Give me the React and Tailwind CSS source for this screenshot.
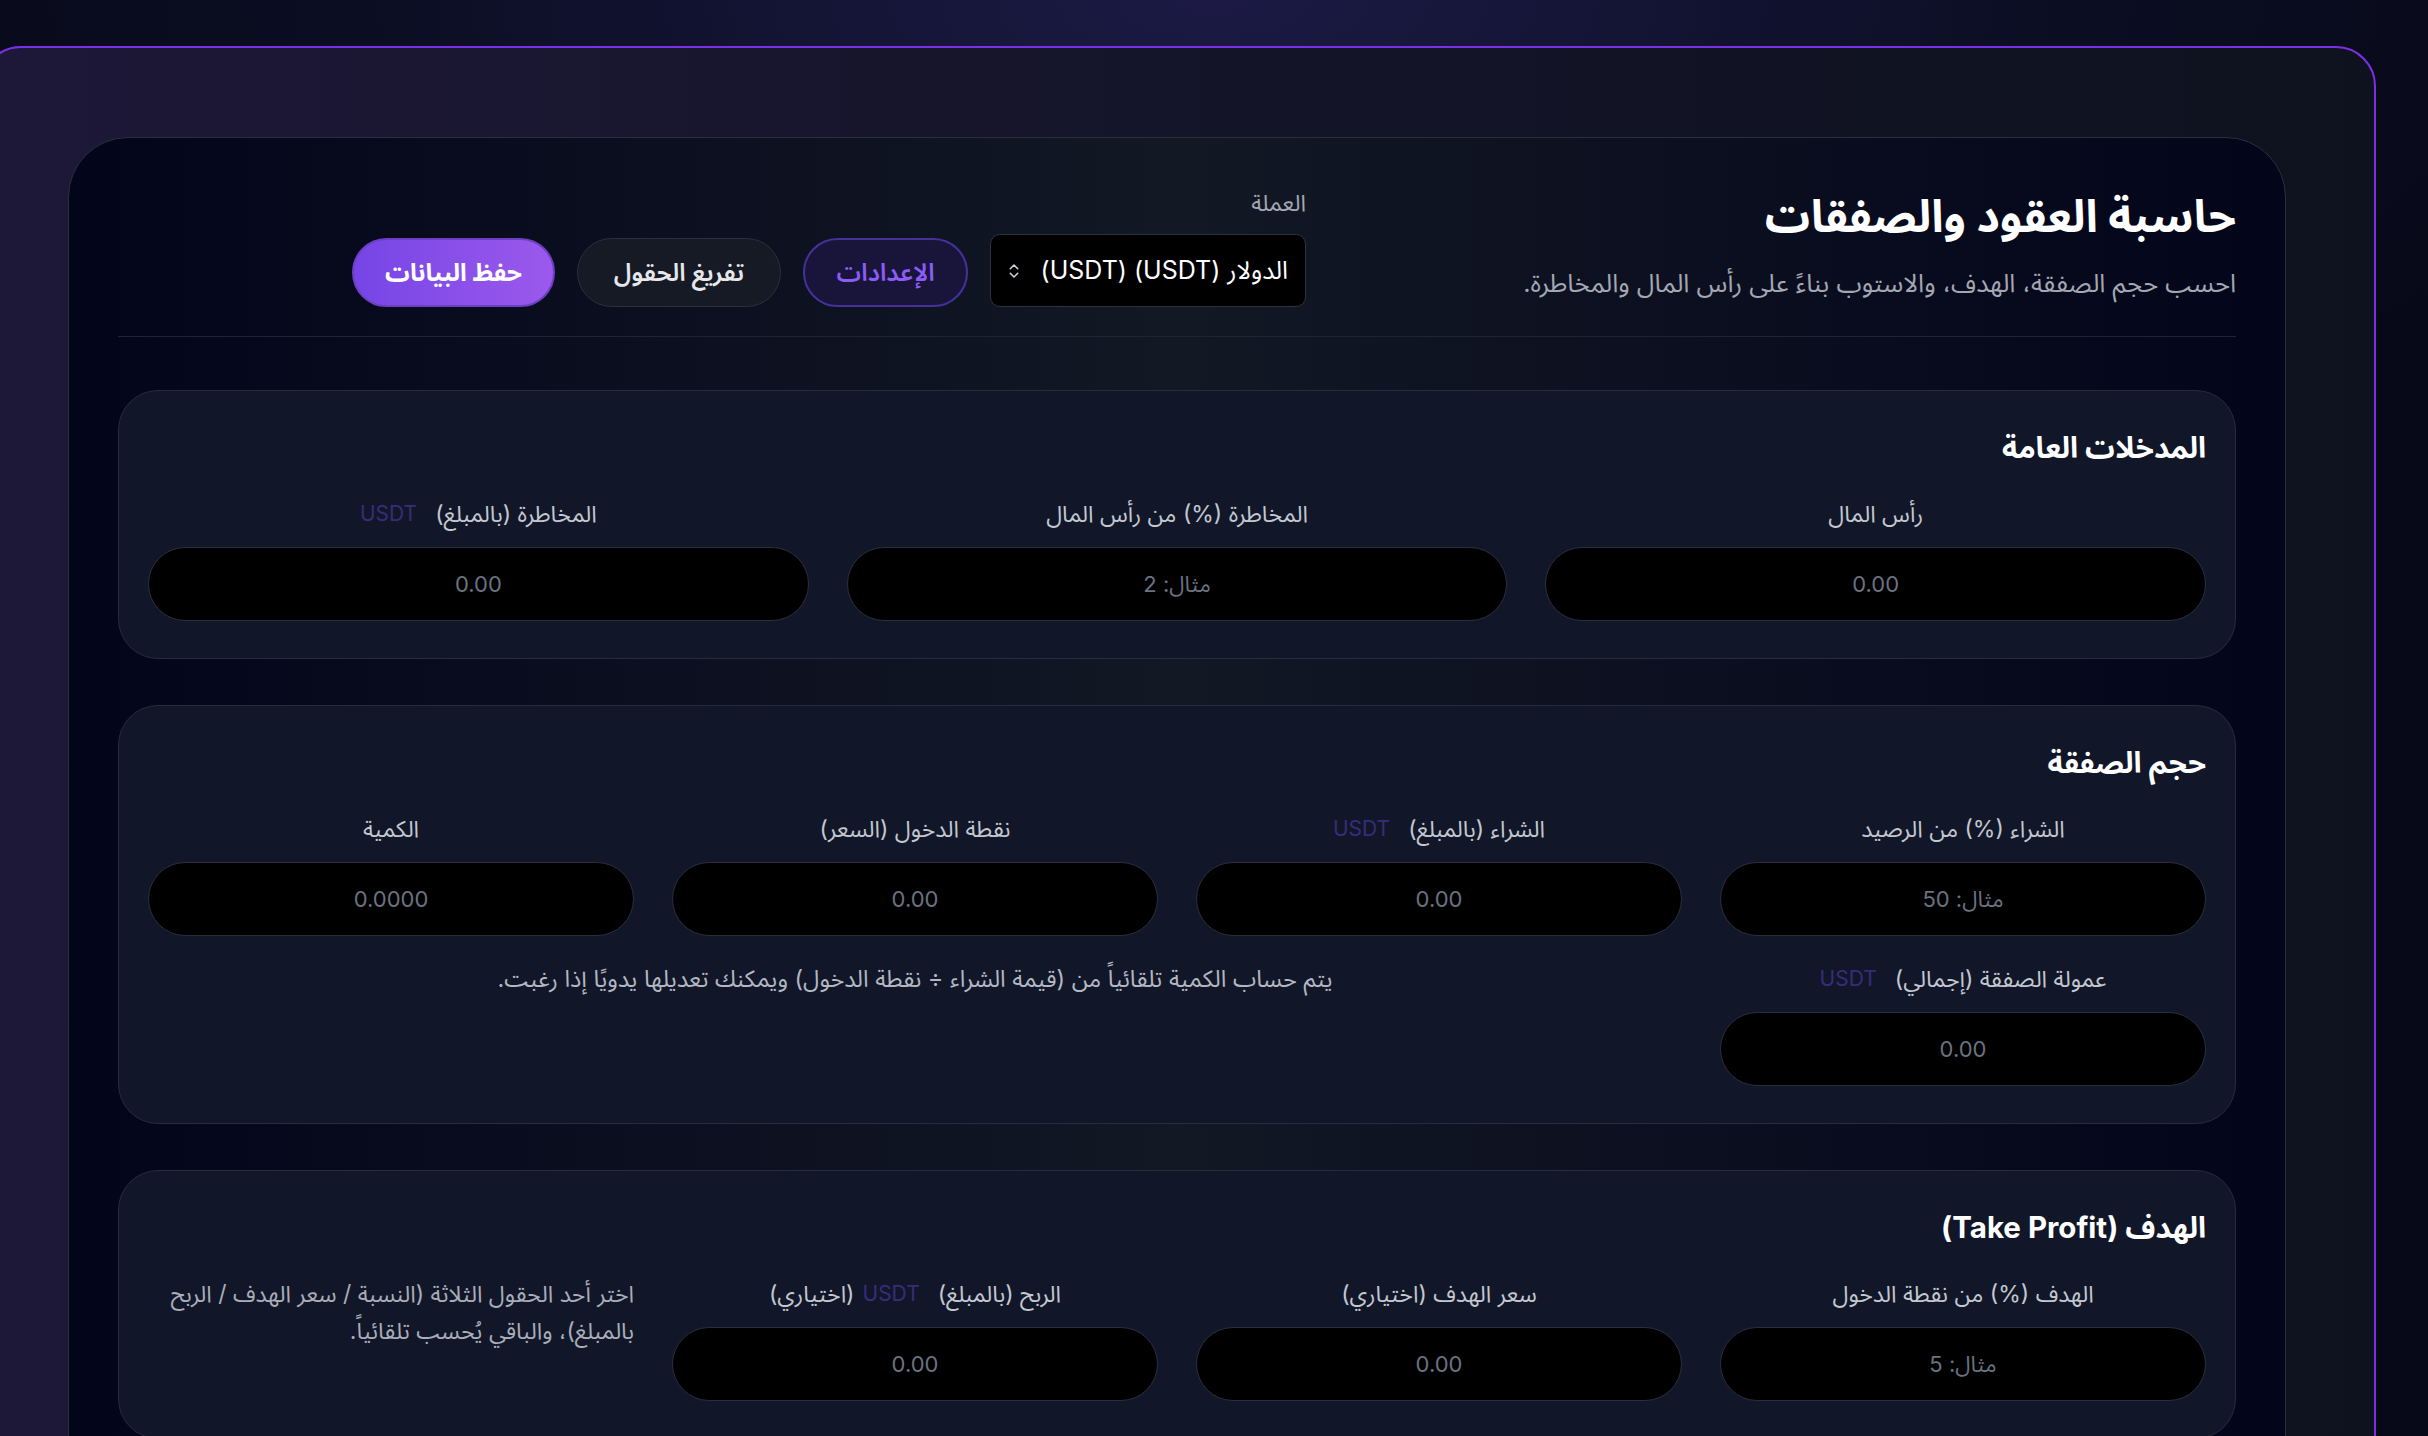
import { ChevronsUpDown } from 'lucide-react';

// حاسبة العقود والصفقات - شاشة الإدخال
const FONT = { fontFamily: 'Inter, "Noto Sans Arabic", "DejaVu Sans", sans-serif' };

function Label({ text, unit, extra }) {
  return (
    <div className="flex items-center justify-center gap-[18px] h-[28px] text-[23px] leading-[28px] text-[#c3c7cf]">
      <span>{text}</span>
      {unit && (
        <span className="flex items-center gap-[8px]">
          <span className="text-[21px] text-[#382c7a]">{unit}</span>
          {extra && <span>{extra}</span>}
        </span>
      )}
    </div>
  );
}

function Field({ label, unit, extra, placeholder }) {
  return (
    <div className="flex flex-col gap-[19px]">
      <Label text={label} unit={unit} extra={extra} />
      <input
        placeholder={placeholder}
        className="h-[74px] w-full rounded-full bg-black border border-[#2a2f3e] text-center text-[22px] text-white placeholder:text-[#6b7280] outline-none"
        style={FONT}
      />
    </div>
  );
}

function Section({ title, children }) {
  return (
    <section className="rounded-[40px] border border-[#262c3c] bg-[#111729] px-[29px] pt-[36px] pb-[37px]">
      <h2 className="text-[29.5px] leading-[40px] font-bold text-white mb-[33px]">{title}</h2>
      {children}
    </section>
  );
}

export default function App() {
  return (
    <div
      dir="rtl"
      className="h-screen overflow-hidden bg-[radial-gradient(ellipse_60%_40%_at_50%_0%,#1c1a45_0%,#0b0d22_60%,#070918_100%)] pt-[46px]"
      style={FONT}
    >
      <div className="mr-[52px] ml-[-19px] rounded-[40px] border-2 border-[#7c30e6] bg-[linear-gradient(to_right,#1e1838,#16152c_40%,#0e121e)] pt-[89px] pl-[85px] pr-[88px] pb-[80px]">
        <div className="rounded-[60px] border border-[#2a2f3c] bg-[linear-gradient(to_right,#03051a,#121824_50%,#03051a)] px-[49px] pt-[48px] pb-[60px]">
          {/* الرأس */}
          <header className="flex items-end border-b border-[#1f2433] pb-[29px]">
            <div className="w-[930px] pb-[6px]">
              <h1 className="text-[45px] leading-[60px] font-bold text-white">حاسبة العقود والصفقات</h1>
              <p className="mt-[19px] text-[25.5px] leading-[36px] text-[#a3a7b3]">
                احسب حجم الصفقة، الهدف، والاستوب بناءً على رأس المال والمخاطرة.
              </p>
            </div>
            <div className="flex items-end gap-[22px]">
              <div className="flex flex-col">
                <span className="text-[23px] leading-[24px] text-[#a3a7b3] mb-[19px]">العملة</span>
                <div className="flex h-[73px] w-[316px] items-center justify-between rounded-[10px] border border-[#2d3140] bg-black pr-[17px] pl-[14px]">
                  <span className="text-[25px] text-white">الدولار (USDT) (USDT)</span>
                  <ChevronsUpDown size={18} className="text-[#d1d5db]" />
                </div>
              </div>
              <button className="h-[69px] w-[165px] rounded-full border-2 border-[#46309a] bg-[#19153a] text-[24.5px] font-semibold text-[#8b5cf6]">
                الإعدادات
              </button>
              <button className="h-[69px] w-[204px] rounded-full border border-[#2b3040] bg-[#151a25] text-[24.5px] font-semibold text-[#e5e7eb]">
                تفريغ الحقول
              </button>
              <button className="h-[69px] w-[203px] rounded-full border-2 border-[#6d3fc4] bg-[linear-gradient(to_right,#7645e6,#9c59ec)] text-[24.5px] font-bold text-white">
                حفظ البيانات
              </button>
            </div>
          </header>

          <div className="mt-[53px] flex flex-col gap-[46px]">
            <Section title="المدخلات العامة">
              <div className="grid grid-cols-3 gap-[38px]">
                <Field label="رأس المال" placeholder="0.00" />
                <Field label="المخاطرة (%) من رأس المال" placeholder="مثال: 2" />
                <Field label="المخاطرة (بالمبلغ)" unit="USDT" placeholder="0.00" />
              </div>
            </Section>

            <Section title="حجم الصفقة">
              <div className="grid grid-cols-4 gap-x-[38px] gap-y-[29px]">
                <Field label="الشراء (%) من الرصيد" placeholder="مثال: 50" />
                <Field label="الشراء (بالمبلغ)" unit="USDT" placeholder="0.00" />
                <Field label="نقطة الدخول (السعر)" placeholder="0.00" />
                <Field label="الكمية" placeholder="0.0000" />
                <Field label="عمولة الصفقة (إجمالي)" unit="USDT" placeholder="0.00" />
                <p className="col-span-3 text-center text-[23.5px] leading-[28px] text-[#b3b7c1]">
                  يتم حساب الكمية تلقائياً من (قيمة الشراء ÷ نقطة الدخول) ويمكنك تعديلها يدويًا إذا رغبت.
                </p>
              </div>
            </Section>

            <Section title="الهدف (Take Profit)">
              <div className="grid grid-cols-4 gap-x-[38px] gap-y-[29px]">
                <Field label="الهدف (%) من نقطة الدخول" placeholder="مثال: 5" />
                <Field label="سعر الهدف (اختياري)" placeholder="0.00" />
                <Field label="الربح (بالمبلغ)" unit="USDT" extra="(اختياري)" placeholder="0.00" />
                <p className="text-[23px] leading-[37px] text-[#a9adb8] -mt-[4px]">
                  اختر أحد الحقول الثلاثة (النسبة / سعر الهدف / الربح بالمبلغ)، والباقي يُحسب تلقائياً.
                </p>
              </div>
            </Section>
          </div>
        </div>
      </div>
    </div>
  );
}
